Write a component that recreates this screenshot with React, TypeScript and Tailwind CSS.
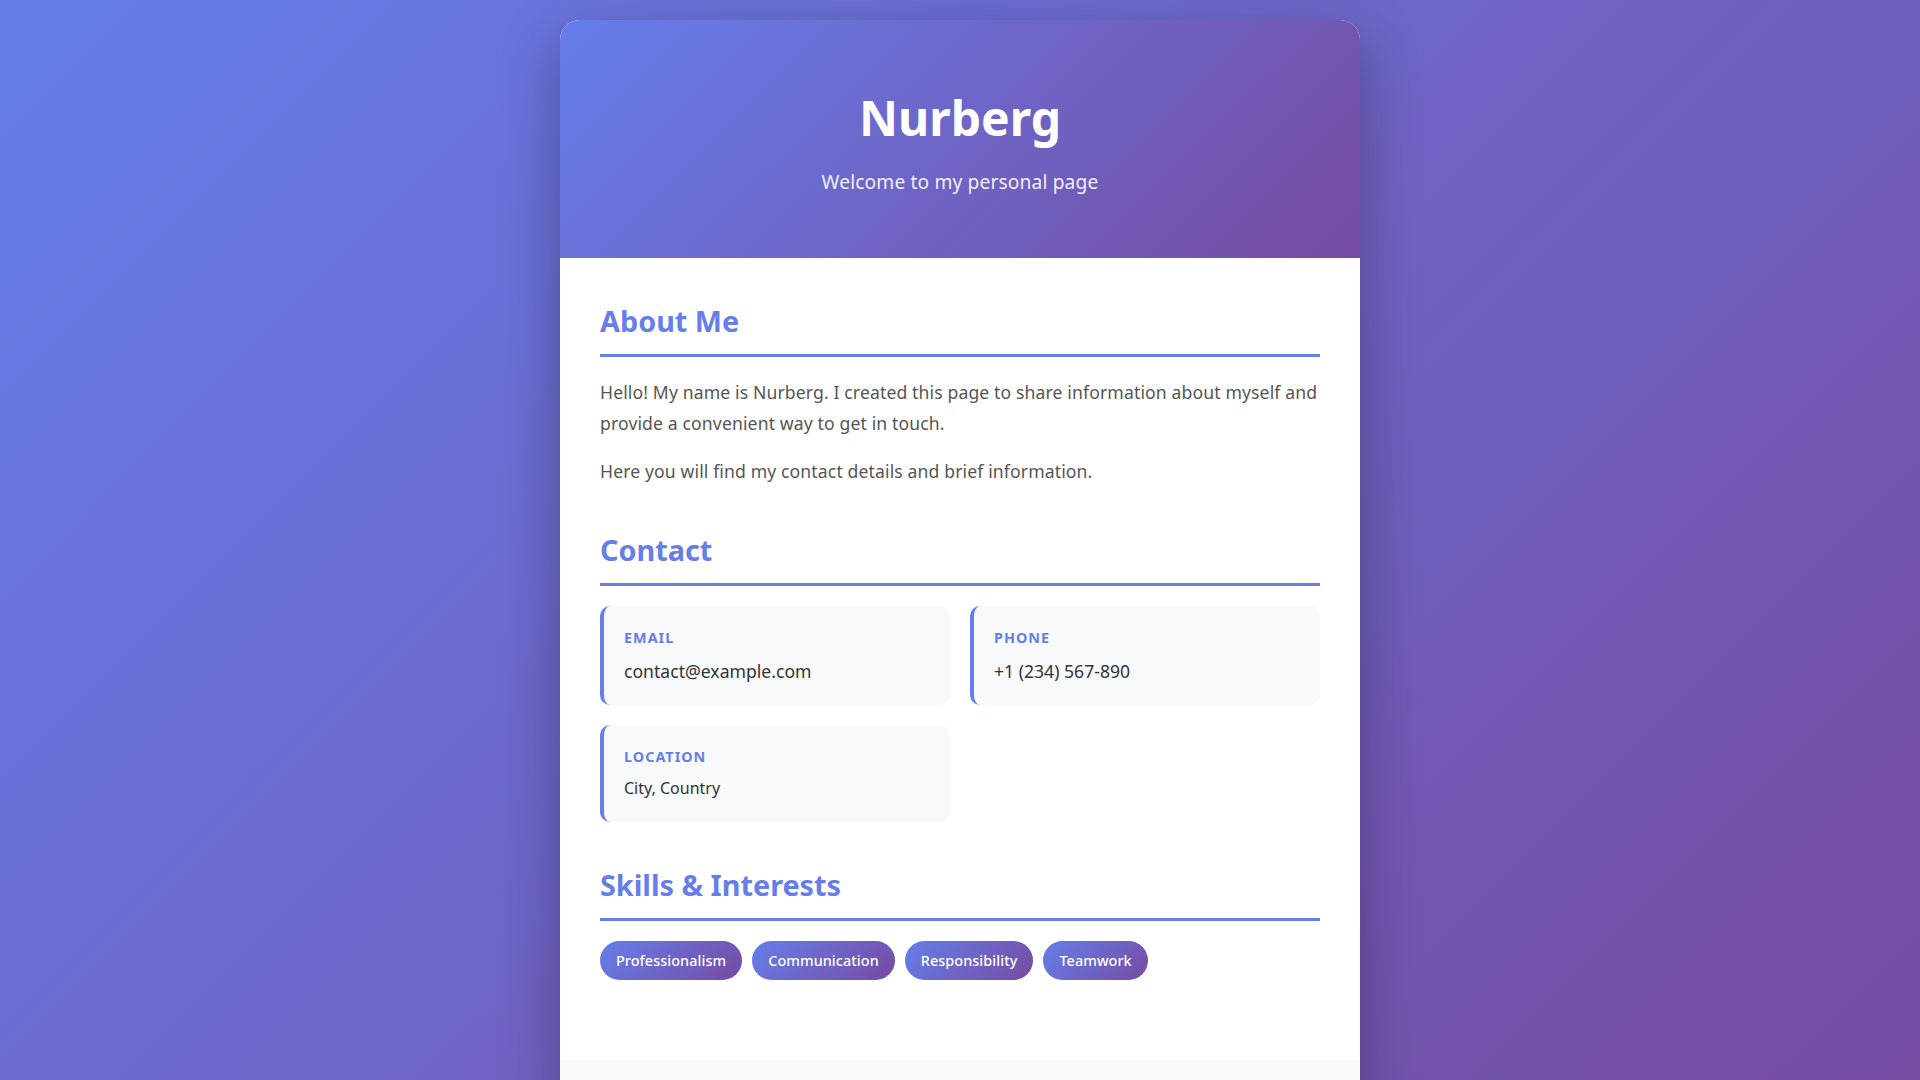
import React from "react";

const skills = ["Professionalism", "Communication", "Responsibility", "Teamwork"];

function SectionTitle({ children }: { children: React.ReactNode }) {
  return (
    <h2 className="text-[28.8px] font-bold leading-[1.6] text-[#667eea] pb-[10px] border-b-[3px] border-[#667eea] mb-[20px]">
      {children}
    </h2>
  );
}

function ContactCard({ label, value, big }: { label: string; value: string; big?: boolean }) {
  return (
    <div className="bg-[#f8f9fa] rounded-[10px] border-l-4 border-[#667eea] p-[20px]">
      <div className="text-[14.4px] leading-[1.6] font-bold uppercase tracking-[1px] text-[#667eea] mb-[8px]">{label}</div>
      <div className={big ? "text-[17.6px] leading-[1.6] text-[#333]" : "text-[16px] leading-[1.6] text-[#333]"}>
        {value}
      </div>
    </div>
  );
}

export default function App() {
  return (
    <div className="min-h-screen bg-fixed bg-[linear-gradient(135deg,#667eea_0%,#764ba2_100%)] p-[20px] font-['Noto_Sans',sans-serif] leading-[1.6] text-[#333]">
      <div className="mx-auto max-w-[800px] bg-white rounded-[20px] overflow-hidden shadow-[0_20px_60px_rgba(0,0,0,0.3)]">
        <header className="bg-[linear-gradient(135deg,#667eea_0%,#764ba2_100%)] text-white text-center px-[40px] py-[60px]">
          <h1 className="text-[48px] font-bold leading-[1.6] mb-[10px]">Nurberg</h1>
          <p className="text-[19.2px] leading-[1.6] tracking-[0.007em] opacity-90">Welcome to my personal page</p>
        </header>

        <main className="p-[40px]">
          <section className="mb-[40px]">
            <SectionTitle>About Me</SectionTitle>
            <p className="text-[17.6px] leading-[1.77] tracking-[0.007em] text-[#555] mb-[17px]">
              Hello! My name is Nurberg. I created this page to share information about myself and provide a convenient way to get in touch.
            </p>
            <p className="text-[17.6px] leading-[1.77] tracking-[0.007em] text-[#555]">
              Here you will find my contact details and brief information.
            </p>
          </section>

          <section className="mb-[40px]">
            <SectionTitle>Contact</SectionTitle>
            <div className="grid grid-cols-2 gap-[20px]">
              <ContactCard label="Email" value="contact@example.com" big />
              <ContactCard label="Phone" value="+1 (234) 567-890" big />
              <ContactCard label="Location" value="City, Country" />
            </div>
          </section>

          <section>
            <SectionTitle>Skills &amp; Interests</SectionTitle>
            <div className="flex flex-wrap gap-[10px]">
              {skills.map((s) => (
                <span
                  key={s}
                  className="bg-[linear-gradient(135deg,#667eea_0%,#764ba2_100%)] text-white text-[14.4px] leading-[1.6] font-medium tracking-[0.005em] px-[16px] py-[8px] rounded-[20px]"
                >
                  {s}
                </span>
              ))}
            </div>
          </section>
        </main>

        <footer className="bg-[#f8f9fa] h-[90px] mt-[40px]" />
      </div>
    </div>
  );
}
